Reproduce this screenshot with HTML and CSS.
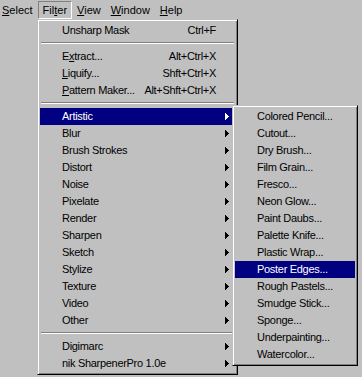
FILE: index.html
```html
<!DOCTYPE html>
<html>
<head>
<meta charset="utf-8">
<link rel="stylesheet" href="styles.css">
</head>
<body>
<div class="menubar">
  <span class="mb-item"><u>S</u>elect</span>
  <span class="mb-item active">Fil<u>t</u>er</span>
  <span class="mb-item"><u>V</u>iew</span>
  <span class="mb-item"><u>W</u>indow</span>
  <span class="mb-item"><u>H</u>elp</span>
</div>

<div class="menu main">
  <div class="mi"><span class="lbl">Unsharp Mask</span><span class="sc">Ctrl+F</span><span class="ar"></span></div>
  <div class="sep"></div>
  <div class="mi"><span class="lbl">E<u>x</u>tract...</span><span class="sc">Alt+Ctrl+X</span><span class="ar"></span></div>
  <div class="mi"><span class="lbl"><u>L</u>iquify...</span><span class="sc">Shft+Ctrl+X</span><span class="ar"></span></div>
  <div class="mi"><span class="lbl"><u>P</u>attern Maker...</span><span class="sc">Alt+Shft+Ctrl+X</span><span class="ar"></span></div>
  <div class="sep"></div>
  <div class="mi hl"><span class="lbl">Artistic</span><span class="sc"></span><span class="ar"><svg width="4" height="7" viewBox="0 0 4 7"><path d="M0 0h1v7H0zM1 1h1v5H1zM2 2h1v3H2zM3 3h1v1H3z"/></svg></span></div>
  <div class="mi"><span class="lbl">Blur</span><span class="sc"></span><span class="ar"><svg width="4" height="7" viewBox="0 0 4 7"><path d="M0 0h1v7H0zM1 1h1v5H1zM2 2h1v3H2zM3 3h1v1H3z"/></svg></span></div>
  <div class="mi"><span class="lbl">Brush Strokes</span><span class="sc"></span><span class="ar"><svg width="4" height="7" viewBox="0 0 4 7"><path d="M0 0h1v7H0zM1 1h1v5H1zM2 2h1v3H2zM3 3h1v1H3z"/></svg></span></div>
  <div class="mi"><span class="lbl">Distort</span><span class="sc"></span><span class="ar"><svg width="4" height="7" viewBox="0 0 4 7"><path d="M0 0h1v7H0zM1 1h1v5H1zM2 2h1v3H2zM3 3h1v1H3z"/></svg></span></div>
  <div class="mi"><span class="lbl">Noise</span><span class="sc"></span><span class="ar"><svg width="4" height="7" viewBox="0 0 4 7"><path d="M0 0h1v7H0zM1 1h1v5H1zM2 2h1v3H2zM3 3h1v1H3z"/></svg></span></div>
  <div class="mi"><span class="lbl">Pixelate</span><span class="sc"></span><span class="ar"><svg width="4" height="7" viewBox="0 0 4 7"><path d="M0 0h1v7H0zM1 1h1v5H1zM2 2h1v3H2zM3 3h1v1H3z"/></svg></span></div>
  <div class="mi"><span class="lbl">Render</span><span class="sc"></span><span class="ar"><svg width="4" height="7" viewBox="0 0 4 7"><path d="M0 0h1v7H0zM1 1h1v5H1zM2 2h1v3H2zM3 3h1v1H3z"/></svg></span></div>
  <div class="mi"><span class="lbl">Sharpen</span><span class="sc"></span><span class="ar"><svg width="4" height="7" viewBox="0 0 4 7"><path d="M0 0h1v7H0zM1 1h1v5H1zM2 2h1v3H2zM3 3h1v1H3z"/></svg></span></div>
  <div class="mi"><span class="lbl">Sketch</span><span class="sc"></span><span class="ar"><svg width="4" height="7" viewBox="0 0 4 7"><path d="M0 0h1v7H0zM1 1h1v5H1zM2 2h1v3H2zM3 3h1v1H3z"/></svg></span></div>
  <div class="mi"><span class="lbl">Stylize</span><span class="sc"></span><span class="ar"><svg width="4" height="7" viewBox="0 0 4 7"><path d="M0 0h1v7H0zM1 1h1v5H1zM2 2h1v3H2zM3 3h1v1H3z"/></svg></span></div>
  <div class="mi"><span class="lbl">Texture</span><span class="sc"></span><span class="ar"><svg width="4" height="7" viewBox="0 0 4 7"><path d="M0 0h1v7H0zM1 1h1v5H1zM2 2h1v3H2zM3 3h1v1H3z"/></svg></span></div>
  <div class="mi"><span class="lbl">Video</span><span class="sc"></span><span class="ar"><svg width="4" height="7" viewBox="0 0 4 7"><path d="M0 0h1v7H0zM1 1h1v5H1zM2 2h1v3H2zM3 3h1v1H3z"/></svg></span></div>
  <div class="mi"><span class="lbl">Other</span><span class="sc"></span><span class="ar"><svg width="4" height="7" viewBox="0 0 4 7"><path d="M0 0h1v7H0zM1 1h1v5H1zM2 2h1v3H2zM3 3h1v1H3z"/></svg></span></div>
  <div class="sep"></div>
  <div class="mi"><span class="lbl">Digimarc</span><span class="sc"></span><span class="ar"><svg width="4" height="7" viewBox="0 0 4 7"><path d="M0 0h1v7H0zM1 1h1v5H1zM2 2h1v3H2zM3 3h1v1H3z"/></svg></span></div>
  <div class="mi"><span class="lbl">nik SharpenerPro 1.0e</span><span class="sc"></span><span class="ar"><svg width="4" height="7" viewBox="0 0 4 7"><path d="M0 0h1v7H0zM1 1h1v5H1zM2 2h1v3H2zM3 3h1v1H3z"/></svg></span></div>
</div>

<div class="menu sub">
  <div class="si">Colored Pencil...</div>
  <div class="si">Cutout...</div>
  <div class="si">Dry Brush...</div>
  <div class="si">Film Grain...</div>
  <div class="si">Fresco...</div>
  <div class="si">Neon Glow...</div>
  <div class="si">Paint Daubs...</div>
  <div class="si">Palette Knife...</div>
  <div class="si">Plastic Wrap...</div>
  <div class="si hl">Poster Edges...</div>
  <div class="si">Rough Pastels...</div>
  <div class="si">Smudge Stick...</div>
  <div class="si">Sponge...</div>
  <div class="si">Underpainting...</div>
  <div class="si">Watercolor...</div>
</div>
</body>
</html>
```
FILE: styles.css
```css
html, body {
  margin: 0;
  padding: 0;
}
body {
  background: #c0c0c0;
  font-family: "Liberation Sans", Arial, sans-serif;
  font-size: 11px;
  color: #000;
  width: 362px;
  height: 377px;
  overflow: hidden;
  position: relative;
}
.menubar {
  display: flex;
  padding-top: 1px;
  height: 18px;
  margin-left: -3px;
}
.mb-item {
  display: block;
  height: 16px;
  line-height: 16px;
  padding: 0 4px;
  border: 1px solid transparent;
  white-space: nowrap;
}
.mb-item.active {
  border-color: #808080 #fff #fff #808080;
}
.menu {
  position: absolute;
  background: #c0c0c0;
  border: 1px solid;
  border-color: #c0c0c0 #000 #000 #c0c0c0;
  box-shadow: inset 1px 1px 0 #fff, inset -1px -1px 0 #808080;
  padding: 2px;
  letter-spacing: -0.3px;
}
.main {
  left: 37px;
  top: 19px;
  width: 195px;
}
.sub {
  left: 232px;
  top: 105px;
  width: 120px;
}
.mi {
  display: grid;
  grid-template-columns: 1fr auto 19px;
  height: 17px;
  line-height: 17px;
  padding-left: 22px;
  white-space: nowrap;
}
.si {
  height: 17px;
  line-height: 17px;
  padding-left: 22px;
  white-space: nowrap;
}
.hl {
  background: #000080;
  color: #fff;
}
.ar {
  display: flex;
  align-items: center;
  justify-content: flex-end;
  padding-right: 6px;
}
.ar svg {
  fill: currentColor;
  display: block;
}
.sep {
  margin: 3px 1px 4px;
  height: 0;
  border-top: 1px solid #808080;
  border-bottom: 1px solid #fff;
}
u {
  text-decoration: underline;
  text-underline-offset: 1px;
}
```
